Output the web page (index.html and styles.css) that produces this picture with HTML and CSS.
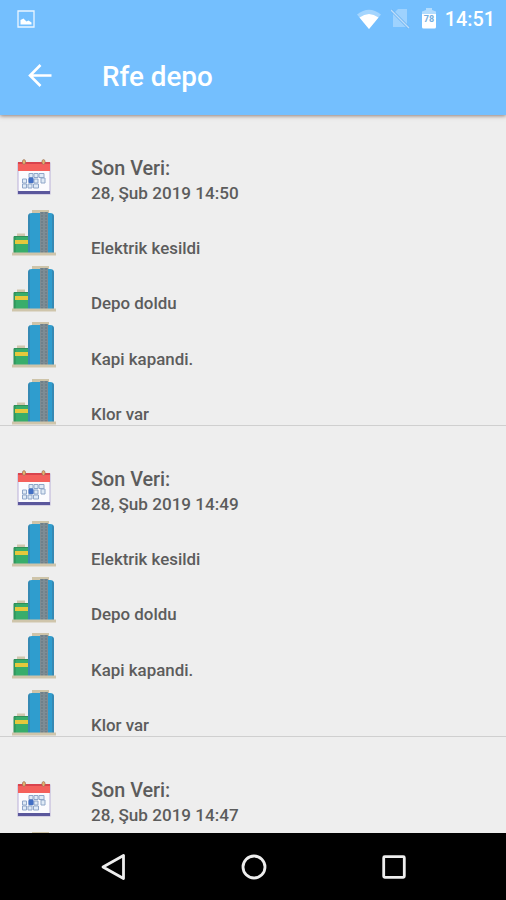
FILE: index.html
```html
<!DOCTYPE html>
<html lang="tr">
<head>
  <meta charset="UTF-8" />
  <meta name="viewport" content="width=device-width, initial-scale=1.0"/>
  <title>Rfe depo</title>
  <link rel="stylesheet" href="styles.css">
</head>
<body>
  <!-- shared icons -->
  <svg class="hide">
    <symbol id="calendar" viewBox="0 0 34 37">
      <rect x="1" y="4" width="32" height="31" fill="#fbfbfe" stroke="#b9b0d8" stroke-width="1"/>
      <rect x="1" y="3" width="32" height="9" fill="#f4605c"/>
      <rect x="1" y="3" width="32" height="2" fill="#d9434d"/>
      <rect x="1" y="32" width="32" height="3" fill="#5a579c"/>
      <g fill="#dfeaf6" stroke="#8fa6c8" stroke-width="1">
        <path d="M12 14.500h4v4h-4zM17 14.500h4v4h-4zM22 14.500h5v4h-5zM5.500 20h4v4h-4zM12 20h4v4h-4zM17 20h4v4h-4zM24 19h4v5h-4zM5.500 25h4v4h-4zM11 25h4v4h-4zM16.500 25h5v4h-5z"/>
      </g>
      <rect x="11.500" y="18.500" width="5" height="5.500" rx="1" fill="#426fc4"/>
      <g fill="#e5b36d" stroke="#99705c" stroke-width=".7">
        <ellipse cx="7" cy="3" rx="1.600" ry="2.400"/>
        <ellipse cx="26.500" cy="3" rx="1.600" ry="2.400"/>
      </g>
    </symbol>
    <symbol id="tank" viewBox="0 0 44 46">
      <rect x="20" y="0" width="17" height="4" fill="#cec4a9"/>
      <path d="M16 43V7q0-4 4-4h18q4 0 4 4v36z" fill="#2f9dce"/>
      <path d="M16 43V7q0-3 2-3.800V43zM40 3.500q2 .8 2 3.500v36h-2z" fill="#3589b4"/>
      <rect x="28" y="2" width="8" height="41" fill="#7d8c94"/>
      <path d="M30 2v41M34 2v41" stroke="#64747e" stroke-width="1" stroke-dasharray="2 1"/>
      <rect x="5" y="23.500" width="8" height="3.500" fill="#cfc6ac"/>
      <rect x="2" y="26.500" width="14" height="16.500" fill="#38ad6b"/>
      <path d="M2 43V26.500h14M3 26.500V43" fill="none" stroke="#2f8f58" stroke-width="1"/>
      <rect x="3" y="30" width="13" height="4" fill="#e6c83c"/>
      <rect x="0" y="42.500" width="44" height="3" fill="#cfc5ab"/>
    </symbol>
  </svg>

  <div class="screen">
    <header class="header">
      <div class="status-bar">
        <svg class="status-image" width="18" height="18" viewBox="0 0 18 18">
          <path d="M1 1h16v16H1z" fill="none" stroke="#fff" stroke-width="1.300" opacity=".85"/>
          <path d="M3.500 14.500V10l3-1.500 3 3 2-1 3 2v2z" fill="#fff"/>
        </svg>
        <svg class="wifi" width="24" height="20" viewBox="0 0 24 20">
          <path d="M0 5.500Q12-4 24 5.500L12 20z" fill="#fff" opacity=".35"/>
          <path d="M2.500 8.500Q12 1.500 21.500 8.500L12 20z" fill="#fff"/>
        </svg>
        <svg class="sim" width="19" height="20" viewBox="0 0 19 20">
          <path d="M7 0h9v18H2V5z" fill="#fff" opacity=".3"/>
          <path d="M0 1l18 18" stroke="#6db4f3" stroke-width="3"/>
          <path d="M0 1l18 18" stroke="#fff" stroke-width="1.300" opacity=".55"/>
        </svg>
        <svg class="battery" width="14" height="21" viewBox="0 0 14 21">
          <path d="M0 6V3.500L4 2V0h6v2l4 1.500V6z" fill="#fff" opacity=".45"/>
          <path d="M0 6h14v13q0 1.500-1.500 1.500h-11Q0 20.500 0 19z" fill="#fff"/>
          <text x="7" y="14" class="battery-level">78</text>
        </svg>
        <span class="clock">14:51</span>
      </div>
      <div class="toolbar">
        <svg class="back" width="24" height="24" viewBox="0 0 24 24">
          <path d="M23.500 11.500H2M12.500 1L2 11.500 12.500 22" fill="none" stroke="#fff" stroke-width="2.600"/>
        </svg>
        <h1>Rfe depo</h1>
      </div>
    </header>

    <main class="list">
      <section class="record">
        <div class="icons">
          <svg class="calendar"><use href="#calendar"/></svg>
          <svg class="tank"><use href="#tank"/></svg>
          <svg class="tank"><use href="#tank"/></svg>
          <svg class="tank"><use href="#tank"/></svg>
          <svg class="tank"><use href="#tank"/></svg>
        </div>
        <div class="details">
          <h2>Son Veri:</h2>
          <p class="date">28, Şub 2019 14:50</p>
          <p class="event">Elektrik kesildi</p>
          <p class="event">Depo doldu</p>
          <p class="event">Kapi kapandi.</p>
          <p class="event">Klor var</p>
        </div>
      </section>

      <section class="record">
        <div class="icons">
          <svg class="calendar"><use href="#calendar"/></svg>
          <svg class="tank"><use href="#tank"/></svg>
          <svg class="tank"><use href="#tank"/></svg>
          <svg class="tank"><use href="#tank"/></svg>
          <svg class="tank"><use href="#tank"/></svg>
        </div>
        <div class="details">
          <h2>Son Veri:</h2>
          <p class="date">28, Şub 2019 14:49</p>
          <p class="event">Elektrik kesildi</p>
          <p class="event">Depo doldu</p>
          <p class="event">Kapi kapandi.</p>
          <p class="event">Klor var</p>
        </div>
      </section>

      <section class="record">
        <div class="icons">
          <svg class="calendar"><use href="#calendar"/></svg>
          <svg class="tank"><use href="#tank"/></svg>
        </div>
        <div class="details">
          <h2>Son Veri:</h2>
          <p class="date">28, Şub 2019 14:47</p>
        </div>
      </section>
    </main>

    <nav class="nav-bar">
      <svg width="28" height="28" viewBox="0 0 28 28"><path d="M23.500 2.500v23L3 14z"/></svg>
      <svg width="28" height="28" viewBox="0 0 28 28"><circle cx="14" cy="14" r="11"/></svg>
      <svg width="28" height="28" viewBox="0 0 28 28"><rect x="3.700" y="3.700" width="20.600" height="20.600" rx="1"/></svg>
    </nav>
  </div>
</body>
</html>
```

FILE: styles.css
```css
* {
  box-sizing: border-box;
}

body {
  margin: 0;
  font-family: Roboto, sans-serif;
  font-weight: 500;
  background: #eeeeee;
}

h1, h2, p {
  margin: 0;
  font-weight: 500;
  white-space: nowrap;
}

svg {
  display: block;
  flex-shrink: 0;
}

.hide {
  display: none;
}

.screen {
  display: flex;
  flex-direction: column;
  height: 100vh;
  overflow: hidden;
}

.header {
  flex: 0 0 115px;
  background: #74bffe;
  color: white;
  box-shadow: 0 1px 4px rgba(80, 50, 40, 0.6);
  z-index: 1;
}

.status-bar {
  display: flex;
  align-items: center;
  height: 37px;
  padding: 0 11px 0 17px;
}

.status-image {
  margin-right: auto;
}

.wifi {
  margin-right: 10px;
}

.sim {
  margin-right: 12px;
}

.battery {
  margin-right: 9px;
}

.battery-level {
  font-size: 9px;
  font-weight: 700;
  text-anchor: middle;
  fill: #74aee0;
}

.clock {
  font-size: 19.8px;
  line-height: 37px;
  padding-top: 2px;
}

.toolbar {
  display: flex;
  align-items: center;
  height: 78px;
  padding-left: 28px;
}

.toolbar h1 {
  margin-left: 50px;
  font-size: 27.8px;
  line-height: 36px;
  padding-top: 1px;
}

.list {
  flex: 1;
  min-height: 0;
  overflow: hidden;
}

.record {
  display: flex;
  height: 311px;
  padding-left: 12px;
  border-bottom: 1px solid #cfcfcf;
}

.icons {
  width: 79px;
  padding-top: 44px;
}

.calendar {
  width: 34px;
  height: 37px;
  margin: 0 0 14px 5px;
}

.tank {
  width: 44px;
  height: 46px;
  margin-bottom: 10.2px;
}

.details {
  padding-top: 41px;
  color: #5c5c5c;
}

.details h2 {
  font-size: 19.8px;
  line-height: 25px;
}

.date {
  font-size: 17.1px;
  line-height: 25px;
}

.event {
  font-size: 16.9px;
  line-height: 20px;
  padding-top: 35.3px;
}

.date + .event {
  padding-top: 32px;
}

.nav-bar {
  display: flex;
  flex: 0 0 67px;
  justify-content: center;
  align-items: center;
  gap: 112px;
  padding-left: 2px;
  background: black;
}

.nav-bar svg {
  fill: none;
  stroke: #eeeeee;
  stroke-width: 2.8;
  stroke-linejoin: round;
}
```
